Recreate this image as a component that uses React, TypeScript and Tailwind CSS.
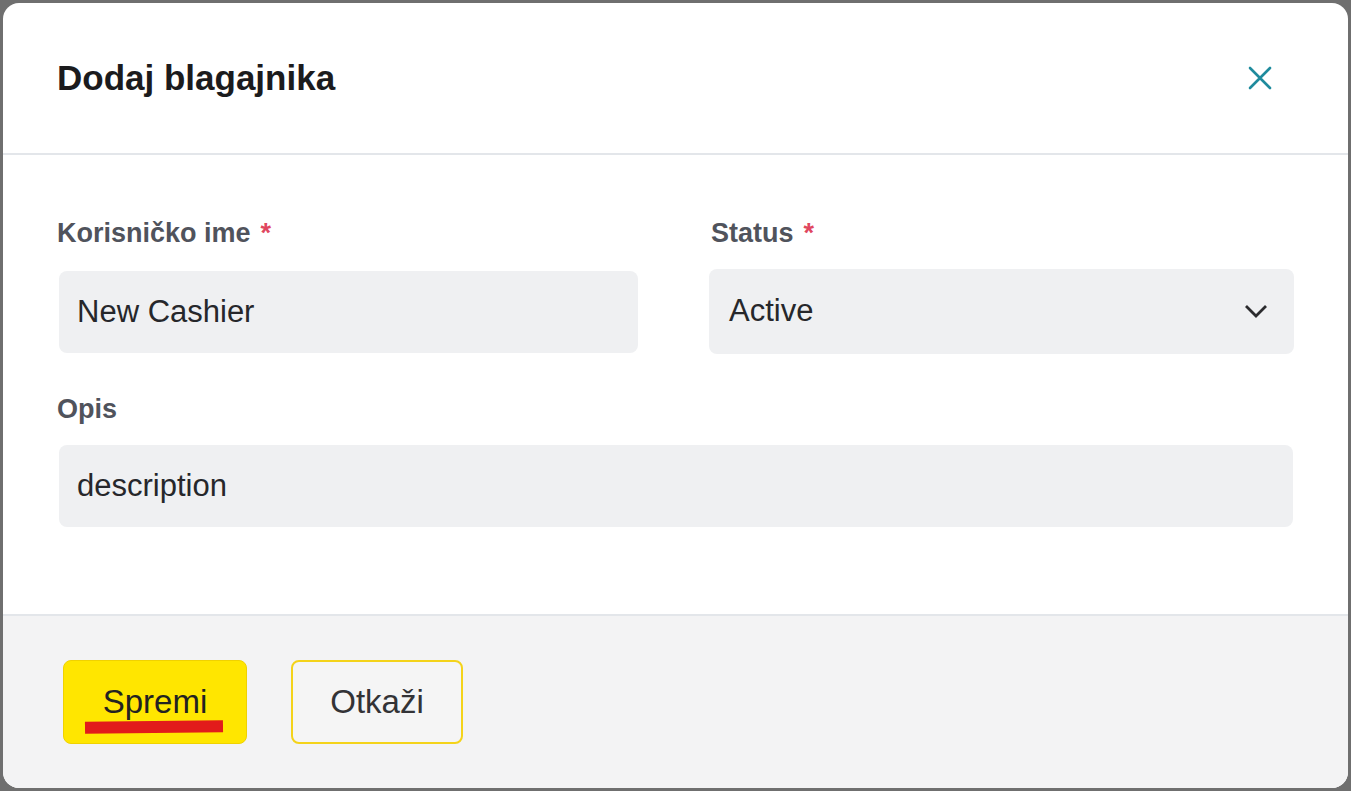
import React from 'react';

function Label({ text, required }: { text: string; required?: boolean }) {
  return (
    <label className="block h-[32px] text-[27px] leading-[32px] font-bold text-[#50535c]">
      {text}
      {required && <span className="ml-[10px] text-[#e0475f]">*</span>}
    </label>
  );
}

export default function App() {
  return (
    <div className="h-[791px] w-full bg-[#6f6f6f] p-[3px] font-['Liberation_Sans',Arial,sans-serif]">
      <div className="flex h-full flex-col overflow-hidden rounded-[16px] bg-white">
        {/* header */}
        <div className="flex h-[152px] items-center justify-between border-b-[2px] border-[#e3e6ea] pl-[54px] pr-[76px]">
          <h2 className="text-[35px] font-bold text-[#1b1b1d]">Dodaj blagajnika</h2>
          <button className="text-[#1f8b9d]">
            <svg width="24" height="24" viewBox="0 0 24 24" fill="none">
              <path d="M2 2L22 22M22 2L2 22" stroke="currentColor" strokeWidth="2.6" strokeLinecap="round" />
            </svg>
          </button>
        </div>

        {/* body */}
        <div className="flex-1 pt-[62px] pl-[54px]">
          <div className="grid grid-cols-[581px_585px] gap-x-[71px]">
            <div>
              <Label text="Korisničko ime" required />
              <div className="mt-[22px] ml-[2px] flex h-[82px] items-center rounded-[8px] bg-[#eff0f2] px-[18px] text-[31px] text-[#26272b]">
                New Cashier
              </div>
            </div>
            <div>
              <div className="ml-[2px]">
                <Label text="Status" required />
              </div>
              <div className="mt-[20px] flex h-[85px] items-center justify-between rounded-[8px] bg-[#eff0f2] pl-[20px] pr-[26px] text-[31px] text-[#26272b]">
                <span>Active</span>
                <svg width="24" height="15" viewBox="0 0 24 15" fill="none">
                  <path d="M2 2L12 12L22 2" stroke="#2b2b2e" strokeWidth="2.8" />
                </svg>
              </div>
            </div>
          </div>
          <div className="mt-[39px] w-[1236px]">
            <Label text="Opis" />
            <div className="mt-[20px] ml-[2px] flex h-[82px] items-center rounded-[8px] bg-[#eff0f2] px-[18px] text-[31px] text-[#26272b]">
              description
            </div>
          </div>
        </div>

        {/* footer */}
        <div className="flex h-[174px] items-center gap-[44px] border-t-[2px] border-[#e3e6ea] bg-[#f3f3f4] pl-[60px]">
          <button className="relative h-[84px] w-[184px] rounded-[8px] border border-[#f0d200] bg-[#ffe600] text-[33px] text-[#222]">
            Spremi
            <span className="absolute left-[21px] top-[60px] h-[12px] w-[138px] -rotate-[0.6deg] bg-[#e21b1b]" />
          </button>
          <button className="h-[84px] w-[172px] rounded-[8px] border-[2px] border-[#f4d31a] bg-[#f5f5f5] text-[33px] text-[#333336]">
            Otkaži
          </button>
        </div>
      </div>
    </div>
  );
}
